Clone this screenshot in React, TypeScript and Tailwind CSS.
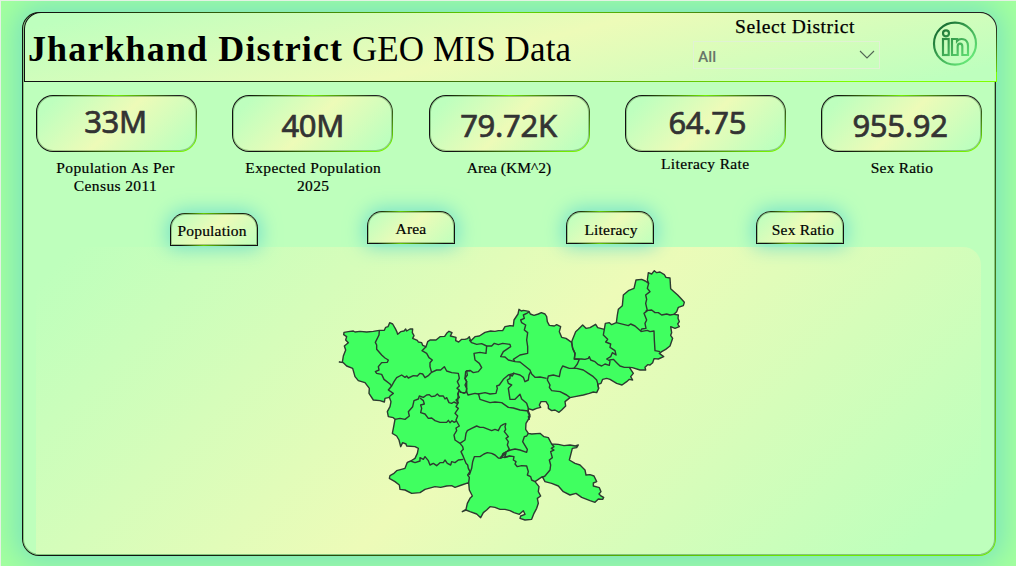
import React from 'react';

type Line = string;
type Sheet = { x: number; y: number; lines: Line[] };

/* The outline runs clockwise from the western tip; each part has its own origin. */
const outline: { x: number; y: number; pts: string }[] = [
  { x: 990, y: 930, pts: '28,156 37,157 40,138 47,120 43,108 55,98 47,90 50,80 41,74 42,67 55,65 70,63 75,66 90,64 110,66 130,64 148,61 163,61 167,52 174,50 179,38 188,42 196,56 200,64 203,73 212,65 222,63 227,57 230,63 240,57 248,57 247,68 252,77 248,85 262,91 265,96 275,98 278,106 288,110 293,95 300,90 318,90 330,80 344,79 350,70 357,64 366,68 361,78 378,82 377,92 386,96 395,88 405,88' },
  { x: 1380, y: 900, pts: '22,116 28,110 32,123 45,110 58,108 75,97 92,93 105,94 115,92 128,92 135,80 150,77 160,78 162,60 174,42 177,28 184,33 190,31 207,34 211,42 222,46 235,42 244,38 255,42 260,50 262,65 268,76 283,78 290,74 302,80 298,95 305,112 318,115 335,127' },
  { x: 1680, y: 780, pts: '37,240 47,215 55,208 68,195 78,205 90,203 107,193 113,203 133,208 136,190 148,188 155,194 169,188 172,165 175,148 187,137 190,105 205,92 222,85 228,60 245,58 256,63 266,70 262,60 265,38 275,42 283,32 290,38 300,36 313,44 318,52 330,54 332,86 342,95 353,105 365,118 373,127 370,137 355,142 350,155 342,163 355,165 354,175 358,185 353,192 358,200 345,205 332,200 335,218 332,226 338,235 330,258 317,268 305,275 298,280 311,290 295,297 282,296 278,308 270,315 263,314 255,322 257,330 240,330 217,323 208,322 220,340 212,350 218,360 208,358 200,365 186,375 170,370 150,358 140,355 128,358 123,370 113,373' },
  { x: 1380, y: 900, pts: '416,265 410,278 400,276 388,280 370,285 345,290 330,293 315,305 317,318 305,330 297,337 285,330 275,332 265,325 265,316 258,305 243,305 238,315 242,322 230,325 218,330 205,326 205,333' },
  { x: 1470, y: 1170, pts: '113,65 120,80 108,100 107,118 115,130 125,132 150,130 162,140 175,143 185,162 205,163 222,167 240,165 256,168 265,165 260,173 247,175 238,210 255,220 270,225 285,240 288,255 300,254 312,258 320,275 310,279 310,288 328,293 333,305 327,312 333,318 341,322 338,328 325,327 315,337 300,332 275,322 258,310 240,315 220,305 205,288 185,280 165,275 157,260 145,268 135,275 147,290 145,305 152,318 142,325 145,340 140,355 132,370 125,388 105,390 90,385 92,378 105,373 100,362 88,373 72,368 60,362 45,358 30,358 15,352 0,350' },
  { x: 1140, y: 1170, pts: '320,360 310,368 302,383 290,372 270,365 258,360 247,365 258,358 262,340 270,325 277,318 268,300 266,278 245,285 225,292 215,287 200,288 182,292 165,290 135,298 120,308 95,310 75,300 60,298 58,285 45,275 28,265 30,257 42,250 50,242 75,235 82,217 92,213 105,205 112,190 115,175 105,170 80,168 78,162 68,158 62,170 57,150 50,138 37,130 40,115 45,88 40,83 25,80 22,65 30,50' },
  { x: 990, y: 930, pts: '183,275 178,262 165,265 163,276 150,272 130,270 117,250 118,235 105,218 85,212 75,200 68,175 50,168 40,158' },
];

const borders: Sheet[] = [
  {
    x: 990, y: 930, lines: [
      '148,61 147,75 136,97 140,105 140,118 155,135 165,144 175,150 172,157 155,158 145,170 147,180 136,185 140,190 155,193 162,208 180,222 185,228',
      '178,262 180,258 190,250 175,240 185,228 192,215 200,203 215,195 225,202 230,198 235,204 250,197 262,198 270,190 278,192 285,203 296,196 303,188',
      '288,110 276,122 290,130 297,143 307,150 300,158 300,170 305,188',
      '303,188 320,180 332,180 343,170 350,183 365,188 385,190 388,205 382,215 388,228 381,235 388,240 385,250 383,275 380,282',
      '388,240 392,247 408,248 410,235 405,225 410,215 405,205 407,185 412,182 420,183',
    ],
  },
  {
    x: 1380, y: 900, lines: [
      '28,120 35,128 50,133 65,131 80,138 95,138 103,130 115,134 128,130 150,133 152,140 130,155 122,170 135,171 145,180 165,185 180,186 195,198 210,210 215,222 225,232 240,231 260,235',
      '80,138 78,160 60,157 42,160 45,180 58,190 65,203 55,215 40,218 30,211 20,213 22,225 15,235 20,245 20,275',
      '207,36 200,40 190,45 193,55 182,60 185,68 197,75 193,90 203,98 200,120 203,140 203,160 180,165 160,178 165,185',
      '335,127 338,145 345,160 343,177 358,178 352,192 342,205 328,205 308,198 302,210 298,230 280,225 265,228 262,240 270,255 268,262 275,272 300,275 320,285 330,293',
      '338,205 350,205 370,210 385,220 400,230 410,240 413,250 416,265',
      '0,275 12,280 20,275 24,285 45,280 55,282 75,278 90,282 108,280 112,265 110,258 118,255 130,238 145,225 162,220 180,225 190,232 195,245 205,240 207,225 212,215',
      '162,218 157,228 150,225 150,235 142,240 145,250 155,255 145,265 150,298 165,298 180,283 185,297 200,310 205,325 205,333',
      '55,280 60,298 90,308 105,306 125,308 145,322 160,324 180,330 205,333 210,345 205,350 208,360',
    ],
  },
  {
    x: 1680, y: 780, lines: [
      '35,247 38,265 45,280 43,297 65,297 75,298 85,295 88,290 92,300 105,305 115,314 125,318 135,312 148,316 150,303 140,297 152,290 157,278 168,285 165,272 150,262 152,252 137,246 143,238 130,225 133,208',
      '148,300 160,298 170,308 180,318 193,322 208,322',
      '169,188 190,193 205,197 212,192 225,198 242,213 245,207 258,205 255,190 260,180 252,160 262,152 257,130 260,118 257,105 270,95 262,85 266,70',
      '257,152 275,150 285,158 295,158 305,165 320,162 330,165 342,163',
      '242,215 262,211 270,215 282,213 283,240 285,272 300,275',
    ],
  },
  {
    x: 1140, y: 1170, lines: [
      '45,88 60,85 75,88 88,78 85,65 98,50 102,32 115,27 118,18 130,22 140,15 148,14 155,20 165,18 172,12 178,18 190,18 195,27 200,23 207,38 215,40 222,36 230,40',
      '120,24 130,32 133,42 122,45 125,55 122,68 135,72 145,85 155,84 165,92 180,97 200,97 205,91 210,98 216,92 222,97 230,93',
      '238,0 233,12 238,22 228,30 235,38 228,50 235,55 225,70 233,78 228,90 238,108 228,114 230,122 222,135 225,150 240,160 248,170 250,178 243,185 250,200 258,220 263,225 265,235 270,245 263,255 268,262 266,278',
      '92,213 105,218 120,213 120,203 130,208 135,200 145,212 150,225 160,220 170,227 180,218 190,218 195,210 202,220 212,225 215,215 225,218 235,210 250,208',
      '240,160 255,150 258,130 262,122 275,115 290,108 300,112 310,112 335,122 345,118 355,122 362,108 370,103 378,100',
      '268,255 275,235 278,215 283,200 300,200 312,192 322,188 335,190 345,195 355,204 365,205',
    ],
  },
  {
    x: 1470, y: 1170, lines: [
      '48,100 45,110 47,118 43,125 55,140 48,145 55,155 52,165 58,178 50,185 40,190 35,203',
      '35,203 60,198 72,200 70,210 78,215 75,222 82,230 95,227 110,228 115,245 112,255 122,260 125,270 135,275',
      '35,203 38,192 50,185 62,180 75,177 90,180 110,187 112,178 98,155 103,140 110,138 115,130',
      '30,203 48,190 44,203 60,198',
      '185,162 192,170 184,175 192,180 182,185 187,203 178,210 182,225 180,240 165,258 157,262',
    ],
  },
];

function DistrictMap() {
  const shape = outline
    .map((p) => p.pts.split(' ').map((s) => {
      const [x, y] = s.split(',').map(Number);
      return `${x + p.x},${y + p.y}`;
    }).join(' '))
    .join(' ');
  return (
    <svg viewBox="990 780 1095 810" className="ml-[294px] mt-[13px] block h-[270px] w-[365px]" aria-label="Jharkhand districts">
      <polygon points={shape} fill="#40ff60" stroke="#2d3a30" strokeWidth="4.2" strokeLinejoin="round" />
      {borders.map((b) => (
        <g key={`${b.x}-${b.y}`} transform={`translate(${b.x} ${b.y})`} fill="none" stroke="#2d3a30" strokeWidth="4.2" strokeLinejoin="round">
          {b.lines.map((l) => <polyline key={l} points={l} />)}
        </g>
      ))}
    </svg>
  );
}

const cardBg = 'bg-[linear-gradient(135deg,#beffbe_10%,#edfbb8_50%,#beffbe_92%),linear-gradient(90deg,#111_10%,#72f000_50%,#222_88%),linear-gradient(90deg,#111_15%,#70e800_82%,#7fff00),linear-gradient(180deg,#222_10%,#70f000_85%),linear-gradient(#111,#111)] [background-clip:padding-box,border-box,border-box,border-box,border-box] [background-origin:padding-box,border-box,border-box,border-box,border-box] [background-size:100%_100%,100%_8px,100%_8px,12px_100%,100%_100%] [background-position:0_0,0_0,0_100%,100%_0,0_0] bg-no-repeat';

type CardData = { value: string; label: string; valuePad: string; labelPad: string };
const cards: CardData[] = [
  { value: '33M', label: 'Population As Per Census 2011', valuePad: 'pt-[4px] pr-[2px]', labelPad: 'pt-[7px] pl-[6px] pr-[8px]' },
  { value: '40M', label: 'Expected Population 2025', valuePad: 'pt-[8px]', labelPad: 'pt-[7px] pl-[5px] pr-[4px]' },
  { value: '79.72K', label: 'Area (KM^2)', valuePad: 'pt-[8px] pr-[1px]', labelPad: 'pt-[7px] tracking-[0px]' },
  { value: '64.75', label: 'Literacy Rate', valuePad: 'pt-[5px] pl-[4px]', labelPad: 'pt-[3px] tracking-[0.35px]' },
  { value: '955.92', label: 'Sex Ratio', valuePad: 'pt-[8px] pr-[3px]', labelPad: 'pt-[7px] pl-[1px] tracking-[0.2px]' },
];

function Card({ value, label, valuePad, labelPad }: CardData) {
  return (
    <div className="w-[161px] tracking-[0.38px]">
      <div className={`h-[57px] rounded-[17px] border border-transparent shadow-[inset_0_0_0_1px_rgba(20,70,10,0.3)] ${cardBg}`}>
        <div className={`text-center font-['Noto_Sans'] text-[31px] leading-[42px] tracking-[-0.3px] text-[#333] [-webkit-text-stroke:0.7px_#333] ${valuePad}`}>{value}</div>
      </div>
      <div className={`text-center text-[15.5px] leading-[18px] [-webkit-text-stroke:0.2px_#000] ${labelPad}`}>{label}</div>
    </div>
  );
}

function Tab({ label, place }: { label: string; place: string }) {
  return (
    <button className={`relative h-[33px] w-[88px] rounded-t-[15px] border border-transparent bg-[linear-gradient(135deg,#beffbe_5%,#edfbb8_50%,#c4ffbc_95%),linear-gradient(90deg,#111_12%,#66c800_38%,#111_88%)] text-center text-[15.5px] tracking-[0.2px] whitespace-nowrap shadow-[0_0_20px_2px_#70dfca,inset_0_0_0_1px_rgba(20,70,10,0.3)] [-webkit-text-stroke:0.2px_#000] [background-clip:padding-box,border-box] [background-origin:padding-box,border-box] ${place}`}>
      {label}
    </button>
  );
}

function LinkedIn() {
  return (
    <svg viewBox="0 0 138 138" className="ml-[52px] mt-[8px] h-[46px] w-[46px]">
      <defs>
        <linearGradient id="ring" gradientUnits="userSpaceOnUse" x1="20" y1="20" x2="112" y2="118">
          <stop offset="0" stopColor="#176c32" />
          <stop offset="1" stopColor="#67e878" />
        </linearGradient>
      </defs>
      <g fill="none" stroke="url(#ring)" strokeWidth="6.5">
        <circle cx="69" cy="68" r="63" />
        <circle cx="42" cy="37" r="9" />
        <rect x="33" y="54" width="17" height="48" />
        <path d="M60 54H75V60C82 52 107 49 108 74V102H91V76C91 65 77 65 77 76V102H60Z" />
      </g>
    </svg>
  );
}

export default function App() {
  return (
    <div className="h-[566px] w-[1016px] overflow-hidden border-l border-t border-[#e4f2e4] bg-[#a3ff9e] pl-[21px] pt-[11px] font-['Liberation_Serif',serif] text-black">
      <main className="h-[544px] w-[974px] rounded-[17px] border border-transparent bg-[linear-gradient(#beffbc,#beffbc),linear-gradient(90deg,#111_2%,#61d800_50%,#222_98%),linear-gradient(90deg,#111_15%,#70ea00_80%),linear-gradient(180deg,#222_10%,#70ea10),linear-gradient(#111,#111)] bg-no-repeat shadow-[0_0_28px_6px_#79e3be,inset_0_0_0_1px_rgba(20,90,10,0.35)] [background-clip:padding-box,border-box,border-box,border-box,border-box] [background-origin:padding-box,border-box,border-box,border-box,border-box] [background-position:0_0,0_0,0_100%,100%_0,0_0] [background-size:100%_100%,100%_10px,100%_10px,12px_100%,100%_100%]">
        <header className="-mt-px ml-px flex h-[70px] w-[973px] rounded-t-[17px] border border-transparent bg-[linear-gradient(166deg,#beffbe_5%,#edfbb8_50%,#beffbe_95%),linear-gradient(90deg,#111_2%,#61d800_50%,#222_96%),linear-gradient(90deg,#111_15%,#7fff00_85%),linear-gradient(180deg,#222_20%,#7fff00),linear-gradient(#111,#111)] bg-no-repeat [background-clip:padding-box,border-box,border-box,border-box,border-box] [background-origin:padding-box,border-box,border-box,border-box,border-box] [background-position:0_0,0_0,0_100%,100%_0,0_0] [background-size:100%_100%,100%_10px,100%_10px,12px_100%,100%_100%]">
          <h1 className="w-[668px] pl-[3px] pt-[14px] text-[35px] leading-[44px] whitespace-nowrap">
            <b className="text-[36px] tracking-[1.12px]">Jharkhand District</b> <span className="tracking-[0.12px]">GEO MIS Data</span>
          </h1>
          <div className="w-[187px]">
            <div className="pl-[17px] pt-[2px] text-center text-[19.5px] leading-[24px] tracking-[0.6px] [-webkit-text-stroke:0.25px_#000]">Select District</div>
            <div className="mt-[2px] flex h-[28px] items-center justify-between border border-[#e0f2d4] pl-[4px] pr-[4px]">
              <span className="pt-[5px] font-['Roboto'] text-[15.5px] font-medium text-[#68766a]">All</span>
              <svg viewBox="0 0 16 10" className="h-[10px] w-[16px]"><path d="M1 1l7 7 7-7" fill="none" stroke="#526655" strokeWidth="1.1" /></svg>
            </div>
          </div>
          <LinkedIn />
        </header>
        <section className="ml-[13px] mt-[13px] flex h-[116px] w-[946px] justify-between">
          {cards.map((c) => <Card key={c.label} {...c} />)}
        </section>
        <nav className="relative ml-[147px] flex h-[36px]">
          <Tab label="Population" place="top-[2px] pr-[4px] pt-[2px]" />
          <Tab label="Area" place="ml-[109px] pt-[3px]" />
          <Tab label="Literacy" place="ml-[111px] pl-[2px] pt-[4px]" />
          <Tab label="Sex Ratio" place="ml-[102px] pl-[6px] pt-[4px]" />
        </nav>
        <section className="ml-[13px] h-[307px] w-[945px] rounded-tr-[18px] bg-[linear-gradient(135deg,#beffbc_3%,#edfbb8_50%,#beffbc_94%)] pt-[0.1px]">
          <DistrictMap />
        </section>
      </main>
    </div>
  );
}
